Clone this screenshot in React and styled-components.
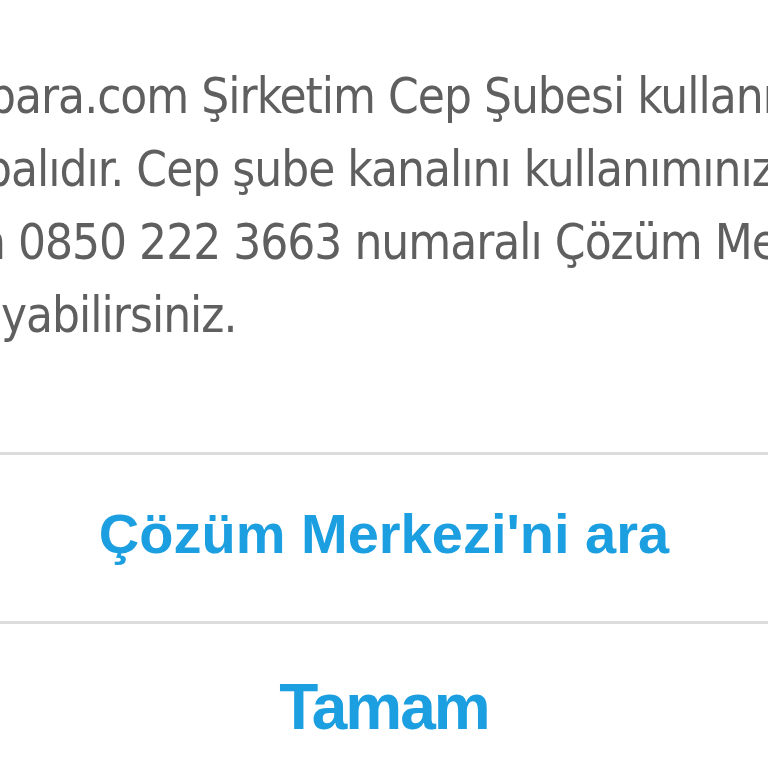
import styled, { createGlobalStyle } from "styled-components";

const GlobalStyle = createGlobalStyle`
  html, body {
    margin: 0;
    padding: 0;
    background: #ffffff;
  }
  body {
    width: 768px;
    height: 768px;
    overflow: hidden;
  }
`;

export default function App() {
  return (
    <>
      <GlobalStyle />
      <Dialog>
        <Message>
          <Line offset={-12}>para.com Şirketim Cep Şubesi kullanımınıza</Line>
          <Line offset={-16}>palıdır. Cep şube kanalını kullanımınıza açmak</Line>
          <Line offset={-22}>n 0850 222 3663 numaralı Çözüm Merkezi'ni</Line>
          <Line offset={1}>yabilirsiniz.</Line>
        </Message>
        <Divider />
        <ActionButton>Çözüm Merkezi'ni ara</ActionButton>
        <Divider />
        <ActionButton large>Tamam</ActionButton>
      </Dialog>
    </>
  );
}

const Dialog = styled.div`
  display: flex;
  flex-direction: column;
  width: 768px;
  height: 768px;
  background: #ffffff;
  overflow: hidden;
`;

const Message = styled.div`
  display: flex;
  flex-direction: column;
  padding-top: 60px;
  height: 452px;
  flex-shrink: 0;
  box-sizing: border-box;
  overflow: hidden;
`;

const Line = styled.div`
  font-family: "DejaVu Sans Condensed", "Liberation Sans", sans-serif;
  font-size: 49px;
  line-height: 73px;
  letter-spacing: -1px;
  color: #5f5f5f;
  white-space: nowrap;
  margin-left: ${(props) => props.offset}px;
`;

const Divider = styled.div`
  height: 3px;
  flex-shrink: 0;
  background: #dcdcdc;
`;

const ActionButton = styled.div`
  display: flex;
  align-items: center;
  justify-content: center;
  height: 166px;
  flex-shrink: 0;
  box-sizing: border-box;
  padding-bottom: ${(props) => (props.large ? "0" : "8px")};
  font-family: "Liberation Sans", Arial, sans-serif;
  font-weight: 700;
  font-size: ${(props) => (props.large ? "64px" : "56px")};
  letter-spacing: ${(props) => (props.large ? "-2px" : "0")};
  line-height: 1;
  color: #1c9fe0;
  cursor: pointer;
`;
